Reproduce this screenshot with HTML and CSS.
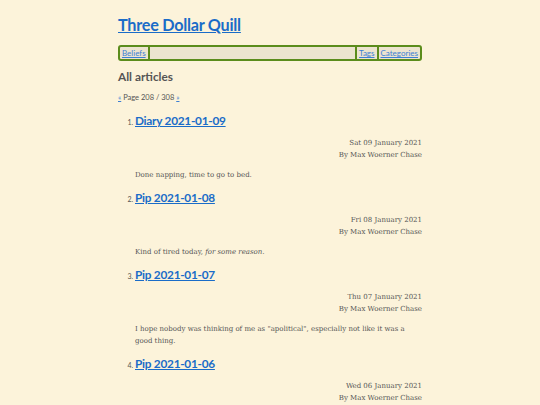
FILE: index.html
```html
<!DOCTYPE html>
<html>
<head>
<meta charset="utf-8">
<link rel="stylesheet" href="styles.css">
</head>
<body>
<div class="page">
  <h1 class="site-title"><a href="#">Three Dollar Quill</a></h1>
  <nav class="nav">
    <a class="nav-link nav-first" href="#">Beliefs</a>
    <span class="nav-spacer"></span>
    <a class="nav-link nav-mid" href="#">Tags</a>
    <a class="nav-link" href="#">Categories</a>
  </nav>
  <h2 class="section-title">All articles</h2>
  <p class="pager"><a href="#">«</a> Page 208 / 308 <a href="#">»</a></p>
  <ol class="articles">
    <li class="article">
      <h3 class="article-title"><a href="#">Diary 2021-01-09</a></h3>
      <div class="meta">
        <div>Sat 09 January 2021</div>
        <div>By Max Woerner Chase</div>
      </div>
      <p class="summary">Done napping, time to go to bed.</p>
    </li>
    <li class="article">
      <h3 class="article-title"><a href="#">Pip 2021-01-08</a></h3>
      <div class="meta">
        <div>Fri 08 January 2021</div>
        <div>By Max Woerner Chase</div>
      </div>
      <p class="summary">Kind of tired today, <em>for some reason.</em></p>
    </li>
    <li class="article">
      <h3 class="article-title"><a href="#">Pip 2021-01-07</a></h3>
      <div class="meta">
        <div>Thu 07 January 2021</div>
        <div>By Max Woerner Chase</div>
      </div>
      <p class="summary">I hope nobody was thinking of me as "apolitical", especially not like it was a good thing.</p>
    </li>
    <li class="article">
      <h3 class="article-title"><a href="#">Pip 2021-01-06</a></h3>
      <div class="meta">
        <div>Wed 06 January 2021</div>
        <div>By Max Woerner Chase</div>
      </div>
    </li>
  </ol>
</div>
</body>
</html>
```

FILE: styles.css
```css
html, body {
  margin: 0;
  padding: 0;
  background: #fcf3da;
}
body {
  font-family: "DejaVu Serif", "Liberation Serif", serif;
  color: #555;
  font-size: 7px;
}
.page {
  width: 304px;
  margin: 0 auto;
  padding-top: 14px;
}
a {
  color: #1a6cc8;
}
.site-title {
  font-family: Lato, "Open Sans", sans-serif;
  font-size: 16.2px;
  letter-spacing: -0.25px;
  font-weight: 700;
  margin: 0 0 9px 0;
  line-height: 22px;
}
.nav {
  display: flex;
  align-items: stretch;
  border: 2px solid #5b8c1c;
  border-radius: 3px;
  background: #ece4cf;
  font-family: Lato, "Open Sans", sans-serif;
  font-size: 8px;
  height: 12px;
  line-height: 12px;
}
.nav-link {
  color: #3c7fd4;
  padding: 0 2px;
}
.nav-first {
  border-right: 2px solid #5b8c1c;
}
.nav-spacer {
  flex: 1;
}
.nav-mid {
  border-left: 2px solid #5b8c1c;
  border-right: 2px solid #5b8c1c;
}
.section-title {
  font-family: Lato, "Open Sans", sans-serif;
  font-size: 11.8px;
  font-weight: 700;
  color: #555;
  margin: 8px 0 0 0;
  line-height: 16px;
}
.pager {
  font-family: Lato, "Open Sans", sans-serif;
  font-size: 7.5px;
  margin: 7px 0 0 0;
  line-height: 12px;
}
.pager a {
  color: #3c7fd4;
}
.articles {
  margin: 9px 0 0 0;
  padding-left: 17px;
  font-family: Lato, "Open Sans", sans-serif;
  font-size: 7px;
}
.article-title {
  font-family: Lato, "Open Sans", sans-serif;
  font-size: 11.8px;
  letter-spacing: -0.25px;
  font-weight: 700;
  margin: 0;
  line-height: 16px;
}
.meta {
  font-family: "DejaVu Serif", "Liberation Serif", serif;
  text-align: right;
  font-size: 7px;
  line-height: 12px;
  margin-top: 8px;
}
.summary {
  font-family: "DejaVu Serif", "Liberation Serif", serif;
  font-size: 7px;
  line-height: 12px;
  margin: 8px 0 9px 0;
}
```
